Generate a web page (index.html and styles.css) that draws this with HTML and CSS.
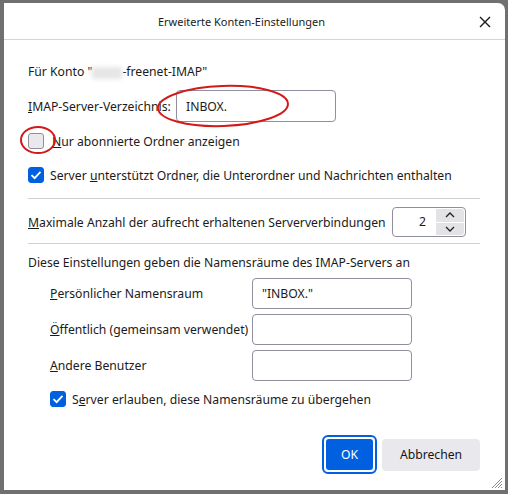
FILE: index.html
```html
<!DOCTYPE html>
<html lang="de">
<head>
<meta charset="utf-8">
<title>Erweiterte Konten-Einstellungen</title>
<link rel="stylesheet" href="styles.css">
</head>
<body>
<div class="dialog">
  <div class="titlebar">
    <span class="title">Erweiterte Konten-Einstellungen</span>
    <span class="close">
      <svg width="12" height="12" viewBox="0 0 12 12"><path d="M1 1 L11 11 M11 1 L1 11" stroke="#1a1a1a" stroke-width="1.4" fill="none"/></svg>
    </span>
  </div>
  <div class="content">
    <div class="line account">Für Konto "<span class="blur"></span>-freenet-IMAP"</div>
    <div class="row imap">
      <span class="imap-label"><u>I</u>MAP-Server-Verzeichnis:</span>
      <span class="field w160 h32">INBOX.</span>
    </div>
    <div class="check-row nur">
      <span class="cb"></span>
      <span class="cb-label"><u>N</u>ur abonnierte Ordner anzeigen</span>
    </div>
    <div class="check-row server">
      <span class="cb on"><svg width="12" height="12" viewBox="0 0 12 12"><path d="M1.5 6.2 L4.6 9.2 L10.5 2.8" stroke="#fff" stroke-width="1.8" fill="none"/></svg></span>
      <span class="cb-label tight">Server <u>u</u>nterstützt Ordner, die Unterordner und Nachrichten enthalten</span>
    </div>
    <div class="sep sep1"></div>
    <div class="row max">
      <span class="max-label"><u>M</u>aximale Anzahl der aufrecht erhaltenen Serververbindungen</span>
      <span class="spinner">
        <span class="spin-value">2</span>
        <span class="spin-btns">
          <span class="spin-btn"><svg width="10" height="6" viewBox="0 0 10 6"><path d="M1 5 L5 1 L9 5" stroke="#222" stroke-width="1.3" fill="none"/></svg></span>
          <span class="spin-btn"><svg width="10" height="6" viewBox="0 0 10 6"><path d="M1 1 L5 5 L9 1" stroke="#222" stroke-width="1.3" fill="none"/></svg></span>
        </span>
      </span>
    </div>
    <div class="sep sep2"></div>
    <div class="line ns-intro">Diese Einstellungen geben die Namensräume des IMAP-Servers an</div>
    <div class="ns-grid">
      <span class="ns-label"><u>P</u>ersönlicher Namensraum</span>
      <span class="field w160 h31">"INBOX."</span>
      <span class="ns-label"><u>Ö</u>ffentlich (gemeinsam verwendet)</span>
      <span class="field w160 h31"></span>
      <span class="ns-label"><u>A</u>ndere Benutzer</span>
      <span class="field w160 h31"></span>
    </div>
    <div class="check-row override">
      <span class="cb on"><svg width="12" height="12" viewBox="0 0 12 12"><path d="M1.5 6.2 L4.6 9.2 L10.5 2.8" stroke="#fff" stroke-width="1.8" fill="none"/></svg></span>
      <span class="cb-label tight">S<u>e</u>rver erlauben, diese Namensräume zu übergehen</span>
    </div>
  </div>
  <div class="footer">
    <span class="btn ok"><span class="ok-inner">OK</span></span>
    <span class="btn cancel">Abbrechen</span>
  </div>
  <svg class="grip" width="14" height="14" viewBox="0 0 14 14"><path d="M13 3 L3 13 M13 6 L6 13 M13 9 L9 13 M13 12 L12 13" stroke="#8a8a8a" stroke-width="1" fill="none"/></svg>
  <svg class="mark mark1" width="140" height="46" viewBox="0 0 140 46"><ellipse cx="68" cy="23" rx="65" ry="20" transform="rotate(-2 68 23)" stroke="#d21a1a" stroke-width="2" fill="none"/></svg>
  <svg class="mark mark2" width="40" height="32" viewBox="0 0 40 32"><ellipse cx="20" cy="16" rx="17" ry="13" stroke="#d21a1a" stroke-width="2" fill="none"/></svg>
</div>
</body>
</html>
```
FILE: styles.css
```css
html, body {
  margin: 0;
  padding: 0;
}
body {
  width: 508px;
  height: 494px;
  background: #707070;
  font-family: "Noto Sans", "Open Sans", sans-serif;
  font-size: 12.2px;
  color: #1b1a20;
  overflow: hidden;
}
.dialog {
  position: relative;
  margin: 3px 3px 0 4px;
  width: 501px;
  height: 487px;
  background: #fff;
  border-top-right-radius: 7px;
  display: flex;
  flex-direction: column;
}
.titlebar {
  height: 36px;
  border-bottom: 1px solid #d4d4d4;
  display: flex;
  align-items: center;
  justify-content: center;
  position: relative;
}
.title {
  font-size: 11px;
  margin-left: -26px;
}
.close {
  position: absolute;
  right: 14px;
  top: 13px;
  display: flex;
}
.content {
  padding: 22px 25px 0 24px;
  display: flex;
  flex-direction: column;
}
.line {
  height: 20px;
  line-height: 20px;
  white-space: nowrap;
}
.blur {
  display: inline-block;
  width: 30px;
  height: 12px;
  background: #e6e6e6;
  filter: blur(2px);
  vertical-align: middle;
}
.row {
  display: flex;
  align-items: center;
  white-space: nowrap;
}
.imap {
  margin-top: 8px;
}
.imap-label {
  width: 148px;
}
.field {
  box-sizing: border-box;
  border: 1px solid #8f8f9d;
  border-radius: 4px;
  display: flex;
  align-items: center;
  padding-left: 9px;
  background: #fff;
}
.w160 { width: 160px; }
.h32 { height: 32px; }
.h31 { height: 31px; }
.check-row {
  display: flex;
  align-items: center;
  height: 20px;
  white-space: nowrap;
}
.nur { margin-top: 9px; }
.server { margin-top: 14px; }
.cb {
  box-sizing: border-box;
  width: 16px;
  height: 16px;
  border: 1px solid #8f8f9d;
  border-radius: 3px;
  background: #e9e9ed;
  display: flex;
  align-items: center;
  justify-content: center;
}
.cb.on {
  background: #0060df;
  border-color: #0060df;
}
.cb-label {
  margin-left: 8px;
}
.cb-label.tight {
  margin-left: 6px;
}
.sep {
  height: 1px;
  background: #d0d0d4;
}
.sep1 { margin-top: 13px; }
.max { margin-top: 8px; height: 30px; }
.max-label { width: 364px; }
.spinner {
  box-sizing: border-box;
  width: 74px;
  height: 30px;
  border: 1px solid #8f8f9d;
  border-radius: 4px;
  display: flex;
}
.spin-value {
  flex: 1;
  text-align: right;
  line-height: 28px;
  padding-right: 10px;
}
.spin-btns {
  width: 28px;
  display: flex;
  flex-direction: column;
  padding: 1px 1px 1px 0;
  gap: 1px;
}
.spin-btn {
  flex: 1;
  background: #e3e3e6;
  display: flex;
  align-items: center;
  justify-content: center;
}
.spin-btn:first-child { border-top-right-radius: 3px; }
.spin-btn:last-child { border-bottom-right-radius: 3px; }
.sep2 { margin-top: 6px; }
.ns-intro { margin-top: 9px; }
.ns-grid {
  margin-top: 5px;
  margin-left: 22px;
  display: grid;
  grid-template-columns: 202px 160px;
  row-gap: 5px;
  align-items: center;
  white-space: nowrap;
}
.override {
  margin-top: 8px;
  margin-left: 22px;
}
.footer {
  margin-top: auto;
  margin-bottom: 16px;
  padding-right: 25px;
  display: flex;
  justify-content: flex-end;
  align-items: center;
  gap: 5px;
}
.btn {
  box-sizing: border-box;
  display: flex;
  align-items: center;
  justify-content: center;
  font-size: 12.2px;
}
.ok {
  width: 55px;
  height: 39px;
  border: 2px solid #0060df;
  border-radius: 6px;
  padding: 2px;
}
.ok-inner {
  flex: 1;
  align-self: stretch;
  background: #0060df;
  color: #fff;
  border-radius: 3px;
  display: flex;
  align-items: center;
  justify-content: center;
}
.cancel {
  width: 98px;
  height: 32px;
  background: #e9e9ed;
  border-radius: 4px;
  color: #15141a;
}
.grip {
  position: absolute;
  right: 2px;
  bottom: 1px;
}
.mark {
  position: absolute;
}
.mark1 { left: 151px; top: 80px; }
.mark2 { left: 14px; top: 121px; }
```
